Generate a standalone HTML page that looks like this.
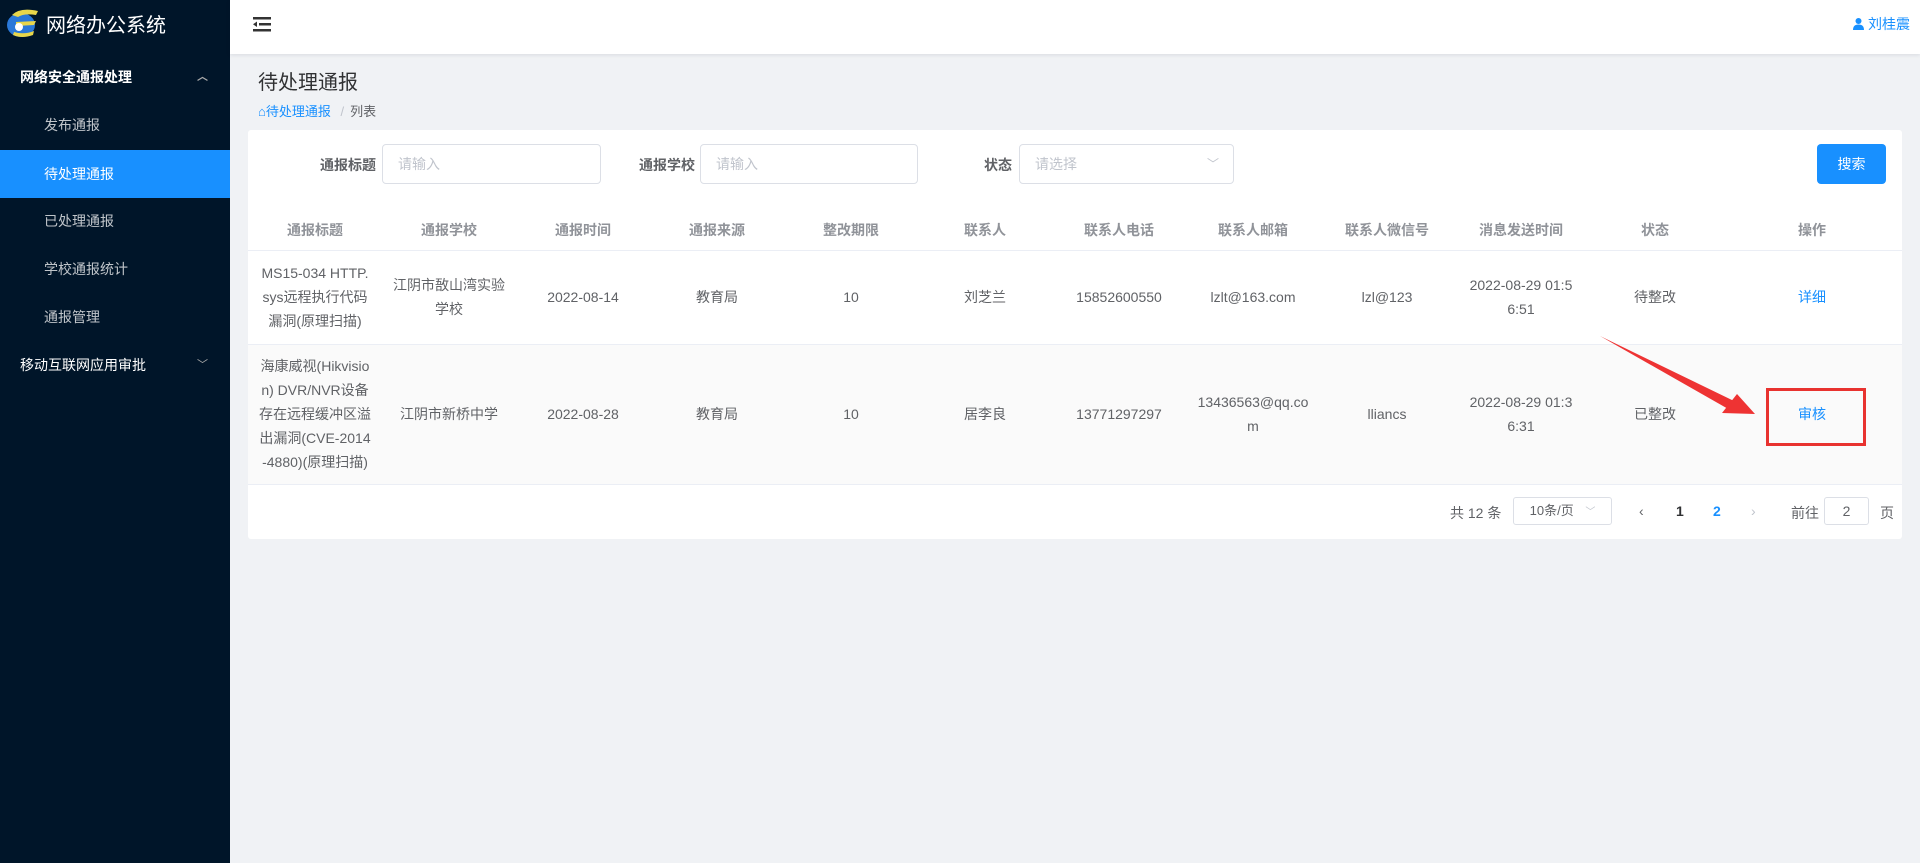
<!DOCTYPE html>
<html><head><meta charset="utf-8"><style>
*{margin:0;padding:0;box-sizing:border-box}
body{width:1920px;height:863px;overflow:hidden;background:#f0f2f5;font-family:"Liberation Sans","Noto Sans CJK SC",sans-serif;color:#606266;position:relative}
.side{position:absolute;left:0;top:0;width:230px;height:863px;background:#001529}
.logo{height:46px;display:flex;align-items:center;padding-left:4px;color:#fff;font-size:20px}
.menu div{position:absolute;left:0;width:230px;height:48px;line-height:48px;font-size:14px;color:rgba(255,255,255,.75)}
.menu .sub{padding-left:44px}
.menu .top{padding-left:20px;color:#fff}
.menu .act{background:#1890ff;color:#fff}
.hdr{position:absolute;left:230px;top:0;right:0;height:54px;background:#fff;box-shadow:0 1px 4px rgba(0,21,41,.1)}
.card{position:absolute;left:248px;top:130px;width:1654px;height:409px;background:#fff;border-radius:3px}
.lbl{position:absolute;font-size:14px;font-weight:bold;color:#606266;top:25px}
.inp{position:absolute;top:14px;height:40px;border:1px solid #dcdfe6;border-radius:4px;font-size:14px;color:#c0c4cc;line-height:38px;padding-left:15px}
.btn{position:absolute;left:1569px;top:14px;width:69px;height:40px;background:#1890ff;color:#fff;border-radius:4px;font-size:14px;text-align:center;line-height:40px}
table{position:absolute;left:0;top:81px;width:1654px;border-collapse:collapse;table-layout:fixed;font-size:14px}
th{height:39px;color:#909399;font-weight:bold;border-bottom:1px solid #ebeef5;font-size:14px}
td{text-align:center;border-bottom:1px solid #ebeef5;line-height:24px;padding:0 11px;color:#606266;word-break:break-all}
.pg{position:absolute;top:373px;font-size:14px;color:#606266}
a{color:#1890ff;text-decoration:none}
</style></head><body>
<div class="side">
<div class="logo"><svg width="38" height="36" viewBox="0 0 38 36"><ellipse cx="17" cy="20" rx="14" ry="12" fill="#2a78d8"/><path d="M8 10 Q16 2 34 6 L32 10 Q20 8 14 12Z" fill="#e8d64a"/><path d="M12 17 L32 16 L30 20 L12 21Z" fill="#e8d64a"/><path d="M10 27 Q20 30 30 26 L29 30 Q18 34 9 30Z" fill="#e8d64a"/><circle cx="15" cy="22" r="4" fill="#fff"/></svg><span style="margin-left:4px">网络办公系统</span></div>
<div class="menu">
<div class="top" style="top:53px;font-weight:bold">网络安全通报处理<span style="position:absolute;right:22px;font-size:11px;color:#aaa">︿</span></div>
<div class="sub" style="top:101px">发布通报</div>
<div class="sub act" style="top:150px">待处理通报</div>
<div class="sub" style="top:197px">已处理通报</div>
<div class="sub" style="top:245px">学校通报统计</div>
<div class="sub" style="top:293px">通报管理</div>
<div class="top" style="top:341px">移动互联网应用审批<span style="position:absolute;right:22px;font-size:11px;color:#aaa">﹀</span></div>
</div></div>
<div class="hdr">
<svg style="position:absolute;left:23px;top:17px" width="18" height="15" viewBox="0 0 18 15"><rect x="0" y="0" width="18" height="2.5" fill="#333"/><rect x="6" y="6" width="12" height="2.5" fill="#333"/><rect x="0" y="12" width="18" height="2.5" fill="#333"/><path d="M0 7.3 L4 4.5 L4 10Z" fill="#333"/></svg>
<div style="position:absolute;right:10px;top:14px;color:#1890ff;font-size:14px"><svg width="11" height="12" viewBox="0 0 11 12" style="vertical-align:-1px"><circle cx="5.5" cy="3" r="3" fill="#1890ff"/><path d="M0 12 Q0 6.5 5.5 6.5 Q11 6.5 11 12Z" fill="#1890ff"/></svg> 刘桂震</div>
</div>
<div style="position:absolute;left:258px;top:66px;font-size:20px;color:#303133">待处理通报</div>
<div style="position:absolute;left:258px;top:101px;font-size:13px;color:#1890ff">⌂待处理通报 <span style="color:#c0c4cc;margin:0 6px">/</span><span style="color:#606266">列表</span></div>
<div class="card">
<div class="lbl" style="left:72px">通报标题</div>
<div class="inp" style="left:134px;width:219px">请输入</div>
<div class="lbl" style="left:391px">通报学校</div>
<div class="inp" style="left:452px;width:218px">请输入</div>
<div class="lbl" style="left:736px">状态</div>
<div class="inp" style="left:771px;width:215px">请选择<span style="position:absolute;right:14px;top:0;font-size:12px;color:#c0c4cc">﹀</span></div>
<div class="btn">搜索</div>
<table>
<colgroup><col span="11" style="width:134px"><col style="width:180px"></colgroup>
<tr><th>通报标题</th><th>通报学校</th><th>通报时间</th><th>通报来源</th><th>整改期限</th><th>联系人</th><th>联系人电话</th><th>联系人邮箱</th><th>联系人微信号</th><th>消息发送时间</th><th>状态</th><th>操作</th></tr>
<tr style="height:94px"><td>MS15-034 HTTP.sys远程执行代码漏洞(原理扫描)</td><td>江阴市敔山湾实验学校</td><td>2022-08-14</td><td>教育局</td><td>10</td><td>刘芝兰</td><td>15852600550</td><td>lzlt@163.com</td><td>lzl@123</td><td>2022-08-29 01:56:51</td><td>待整改</td><td><a>详细</a></td></tr>
<tr style="height:140px;background:#fafafa"><td>海康威视(Hikvision) DVR/NVR设备存在远程缓冲区溢出漏洞(CVE-2014-4880)(原理扫描)</td><td>江阴市新桥中学</td><td>2022-08-28</td><td>教育局</td><td>10</td><td>居李良</td><td>13771297297</td><td>13436563@qq.com</td><td>lliancs</td><td>2022-08-29 01:36:31</td><td>已整改</td><td><a>审核</a></td></tr>
</table>
<div class="pg" style="left:1202px">共 12 条</div>
<div class="pg" style="left:1265px;top:367px;width:99px;height:28px;border:1px solid #dcdfe6;border-radius:3px;line-height:26px;text-align:center;font-size:13px">10条/页 <span style="font-size:10px;color:#c0c4cc;margin-left:8px">﹀</span></div>
<div class="pg" style="left:1391px">‹</div>
<div class="pg" style="left:1428px;font-weight:bold;color:#303133">1</div>
<div class="pg" style="left:1465px;font-weight:bold;color:#1890ff">2</div>
<div class="pg" style="left:1503px;color:#c0c4cc">›</div>
<div class="pg" style="left:1543px">前往</div>
<div class="pg" style="left:1576px;top:367px;width:45px;height:28px;border:1px solid #dcdfe6;border-radius:3px;line-height:26px;text-align:center">2</div>
<div class="pg" style="left:1632px">页</div>
</div>
<div style="position:absolute;left:1766px;top:388px;width:100px;height:58px;border:3px solid #e8322f"></div>
<svg style="position:absolute;left:0;top:0" width="1920" height="863"><path d="M1600 336 L1734 401 L1730 410 Z" fill="#ee3333"/><path d="M1755 414 L1722 413 L1737 394Z" fill="#ee3333"/></svg>
</body></html>
